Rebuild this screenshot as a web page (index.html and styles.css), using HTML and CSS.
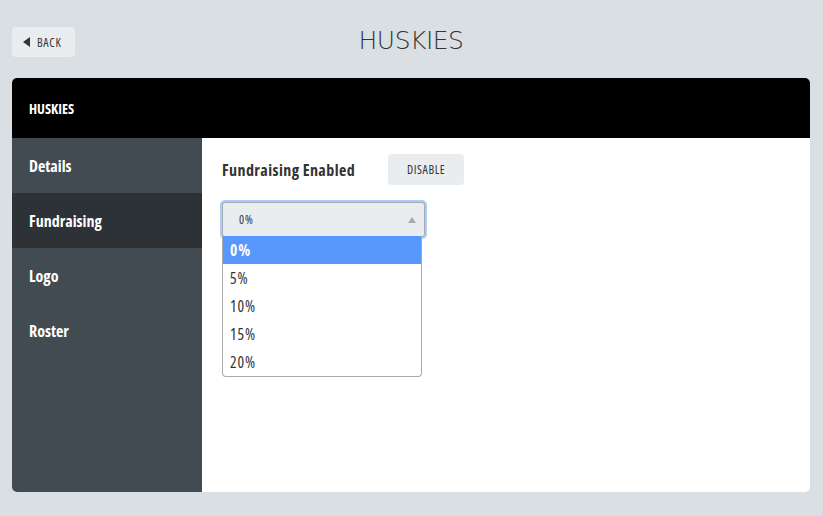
FILE: index.html
```html
<!DOCTYPE html>
<html>
<head>
<meta charset="utf-8">
<link rel="stylesheet" href="styles.css">
</head>
<body>
<div class="page">
  <header class="topbar">
    <button class="back"><span class="back-arrow"></span>BACK</button>
    <h1 class="title">HUSKIES</h1>
  </header>
  <section class="card">
    <div class="card-head">HUSKIES</div>
    <div class="card-body">
      <nav class="sidebar">
        <div class="nav-item">Details</div>
        <div class="nav-item active">Fundraising</div>
        <div class="nav-item">Logo</div>
        <div class="nav-item">Roster</div>
      </nav>
      <main class="content">
        <div class="row">
          <span class="label">Fundraising Enabled</span>
          <button class="btn">DISABLE</button>
        </div>
        <div class="select">
          <div class="select-box">
            <span>0%</span>
            <span class="caret"></span>
          </div>
          <ul class="options">
            <li class="opt selected">0%</li>
            <li class="opt">5%</li>
            <li class="opt">10%</li>
            <li class="opt">15%</li>
            <li class="opt">20%</li>
          </ul>
        </div>
      </main>
    </div>
  </section>
</div>
</body>
</html>
```

FILE: styles.css
```css
* { box-sizing: border-box; }
html, body { margin: 0; padding: 0; }
body {
  background: #dadfe3;
  font-family: "Open Sans", "DejaVu Sans Condensed", sans-serif;
  font-stretch: 75%;
  color: #333;
  width: 823px;
  height: 516px;
  overflow: hidden;
}
.page { padding: 0 13px 0 12px; }
.topbar {
  position: relative;
  height: 78px;
  display: flex;
  align-items: flex-start;
}
.back {
  margin-top: 27px;
  width: 63px;
  height: 30px;
  border: none;
  border-radius: 4px;
  background: #e9edf0;
  color: #333;
  font-family: inherit;
  font-stretch: 75%;
  font-size: 12px;
  letter-spacing: 0.7px;
  display: flex;
  align-items: center;
  padding: 0 0 0 11px;
  gap: 7px;
}
.back-arrow {
  width: 0; height: 0;
  border-top: 5px solid transparent;
  border-bottom: 5px solid transparent;
  border-right: 7px solid #333;
}
.title {
  position: absolute;
  left: 0; right: 0; top: 26px;
  margin: 0;
  text-align: center;
  font-family: "DejaVu Sans", sans-serif;
  font-stretch: 100%;
  font-weight: 200;
  font-size: 25px;
  letter-spacing: -0.5px;
  color: #333;
  pointer-events: none;
}
.card {
  height: 414px;
  border-radius: 5px;
  overflow: hidden;
  background: #fff;
  display: flex;
  flex-direction: column;
}
.card-head {
  height: 60px;
  background: #000;
  color: #fff;
  font-weight: bold;
  font-size: 14px;
  display: flex;
  align-items: center;
  padding-left: 17px;
}
.card-body { flex: 1; display: flex; }
.sidebar {
  width: 190px;
  background: #434b52;
}
.nav-item {
  height: 55px;
  display: flex;
  align-items: center;
  padding-left: 17px;
  color: #fff;
  font-weight: bold;
  font-size: 16px;
}
.nav-item.active { background: #2d3236; }
.content {
  flex: 1;
  padding: 16px 20px;
}
.row {
  display: flex;
  align-items: center;
  height: 31px;
}
.label {
  flex: none;
  font-weight: bold;
  font-size: 16px;
  letter-spacing: 0.42px;
  width: 166px;
}
.btn {
  flex: none;
  width: 76px;
  height: 31px;
  border: none;
  border-radius: 4px;
  background: #e9edf0;
  color: #333;
  font-family: inherit;
  font-stretch: 75%;
  font-size: 12px;
  letter-spacing: 0.6px;
}
.select {
  margin-top: 17px;
  width: 203px;
}
.select-box {
  height: 35px;
  border: 1px solid #aaa;
  border-radius: 3px;
  background: #e9edf0;
  box-shadow: 0 0 0 2px #a9cdfb;
  display: flex;
  align-items: center;
  justify-content: space-between;
  padding: 0 8px 0 16px;
  font-size: 12px;
  letter-spacing: 0.8px;
}
.caret {
  width: 0; height: 0;
  border-left: 4.5px solid transparent;
  border-right: 4.5px solid transparent;
  border-bottom: 6px solid #aaa;
}
.options {
  list-style: none;
  margin: -1px 0 0 0;
  padding: 0;
  width: 200px;
  border: 1px solid #aaa;
  border-top: none;
  border-radius: 0 0 4px 4px;
  background: #fff;
  position: relative;
}
.opt {
  height: 28px;
  display: flex;
  align-items: center;
  padding-left: 7px;
  font-size: 15.5px;
  letter-spacing: 0.9px;
  color: #333;
}
.opt.selected {
  background: #5897fb;
  color: #fff;
  font-weight: bold;
}
```
